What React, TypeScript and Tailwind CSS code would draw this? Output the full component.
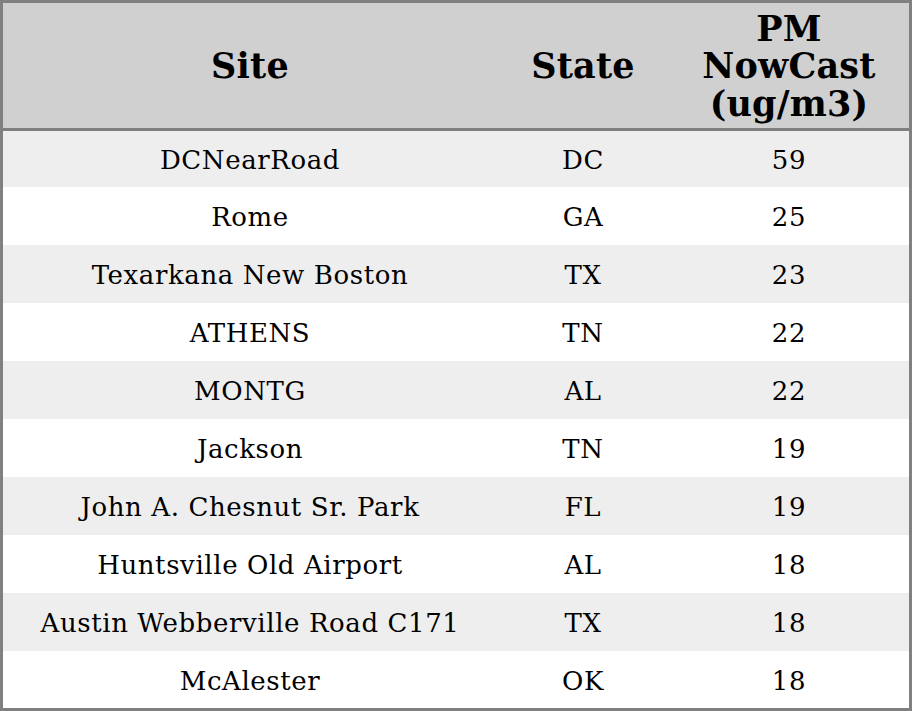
const rows: [string, string, string][] = [
  ["DCNearRoad", "DC", "59"],
  ["Rome", "GA", "25"],
  ["Texarkana New Boston", "TX", "23"],
  ["ATHENS", "TN", "22"],
  ["MONTG", "AL", "22"],
  ["Jackson", "TN", "19"],
  ["John A. Chesnut Sr. Park", "FL", "19"],
  ["Huntsville Old Airport", "AL", "18"],
  ["Austin Webberville Road C171", "TX", "18"],
  ["McAlester", "OK", "18"],
];

const heights = ["h-[56px]", "h-[58px]", "h-[58px]", "h-[58px]", "h-[58px]", "h-[58px]", "h-[58px]", "h-[58px]", "h-[58px]", "h-[57px]"];

export default function App() {
  return (
    <div className="w-[912px] h-[711px] bg-white text-black font-['DejaVu_Serif',serif]">
      <div className="w-[912px] h-[711px] border-[3px] border-[#808080] flex flex-col">
        <div className="h-[125px] bg-[#d0d0d0] grid grid-cols-[494px_172px_240px] items-center text-center font-bold text-[35px] leading-[37.5px] tracking-[0.2px] pt-[1px]">
          <div>Site</div>
          <div>State</div>
          <div>PM<br />NowCast<br />(ug/m3)</div>
        </div>
        <div className="h-[3px] bg-[#808080]" />
        {rows.map((r, i) => (
          <div
            key={i}
            className={`${heights[i]} ${i % 2 === 0 ? "bg-[#eeeeee]" : "bg-white"} grid grid-cols-[494px_172px_240px] items-center text-center text-[26px] tracking-[0.6px] pt-[3px]`}
          >
            <div>{r[0]}</div>
            <div>{r[1]}</div>
            <div>{r[2]}</div>
          </div>
        ))}
      </div>
    </div>
  );
}
